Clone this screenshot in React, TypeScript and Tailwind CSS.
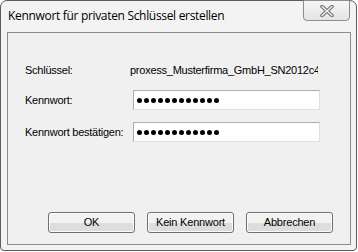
const dots = Array.from({ length: 12 });

function PasswordBox() {
  return (
    <div className="ml-[3px] flex h-[20px] w-[187px] items-center gap-[2px] border border-[#dbdfe6] border-l-[#abadb3] border-t-[#abadb3] bg-white pl-[3px]">
      {dots.map((_, i) => (
        <span key={i} className="h-[5px] w-[5px] rounded-full bg-black" />
      ))}
    </div>
  );
}

function WinButton({ label }: { label: string }) {
  return (
    <button
      type="button"
      className="h-[21px] w-[87px] rounded-[3px] border border-[#707070] bg-gradient-to-b from-[#f2f2f2] from-50% to-[#dddddd] to-50% text-[11px] tracking-[-0.2px] text-black shadow-[inset_0_0_0_1px_#fcfcfc]"
    >
      {label}
    </button>
  );
}

export default function App() {
  return (
    <div className="h-[252px] w-[358px] bg-white font-['Liberation_Sans',Arial,sans-serif]">
      <div className="flex h-[251px] w-[357px] flex-col rounded-t-[7px] rounded-b-[4px] border border-[#5c5c5c] bg-[#f3f3f3] pb-[5px] pl-[6px] pr-[5px]">
        <div className="flex h-[31px] items-start">
          <span className="mt-[7px] pl-[1px] font-['Open_Sans',sans-serif] text-[12px] leading-[16px] tracking-[-0.32px] text-black">
            Kennwort für privaten Schlüssel erstellen
          </span>
          <div className="-mt-[1px] ml-auto mr-[1px] flex h-[21px] w-[47px] items-center justify-center rounded-b-[4px] border border-[#8e8e8e] bg-gradient-to-b from-[#f7f7f7] to-[#e4e4e4]">
            <svg width="14" height="12" viewBox="0 0 14 12" aria-hidden="true">
              <path d="M2 1.5 L12 10.5 M12 1.5 L2 10.5" stroke="#6f6f6f" strokeWidth="3.6" strokeLinecap="round" />
              <path d="M2 1.5 L12 10.5 M12 1.5 L2 10.5" stroke="#f4f4f4" strokeWidth="1.4" strokeLinecap="round" />
            </svg>
          </div>
        </div>

        <div className="flex flex-1 flex-col border border-[#8c8c8c] bg-[#f0f0f0] pb-[11px] pl-[17px] pr-[17px] pt-[27px] text-[11px] tracking-[-0.25px] text-black">
          <div className="flex h-[20px] items-center">
            <span className="w-[105px]">Schlüssel:</span>
            <span className="w-[188px] overflow-hidden whitespace-nowrap">proxess_Musterfirma_GmbH_SN2012c4</span>
          </div>
          <div className="mt-[10px] flex h-[20px] items-center">
            <span className="w-[105px]">Kennwort:</span>
            <PasswordBox />
          </div>
          <div className="mt-[12px] flex h-[20px] items-center">
            <span className="w-[105px]">Kennwort bestätigen:</span>
            <PasswordBox />
          </div>

          <div className="mt-auto flex justify-end gap-[12px]">
            <WinButton label="OK" />
            <WinButton label="Kein Kennwort" />
            <WinButton label="Abbrechen" />
          </div>
        </div>
      </div>
    </div>
  );
}
